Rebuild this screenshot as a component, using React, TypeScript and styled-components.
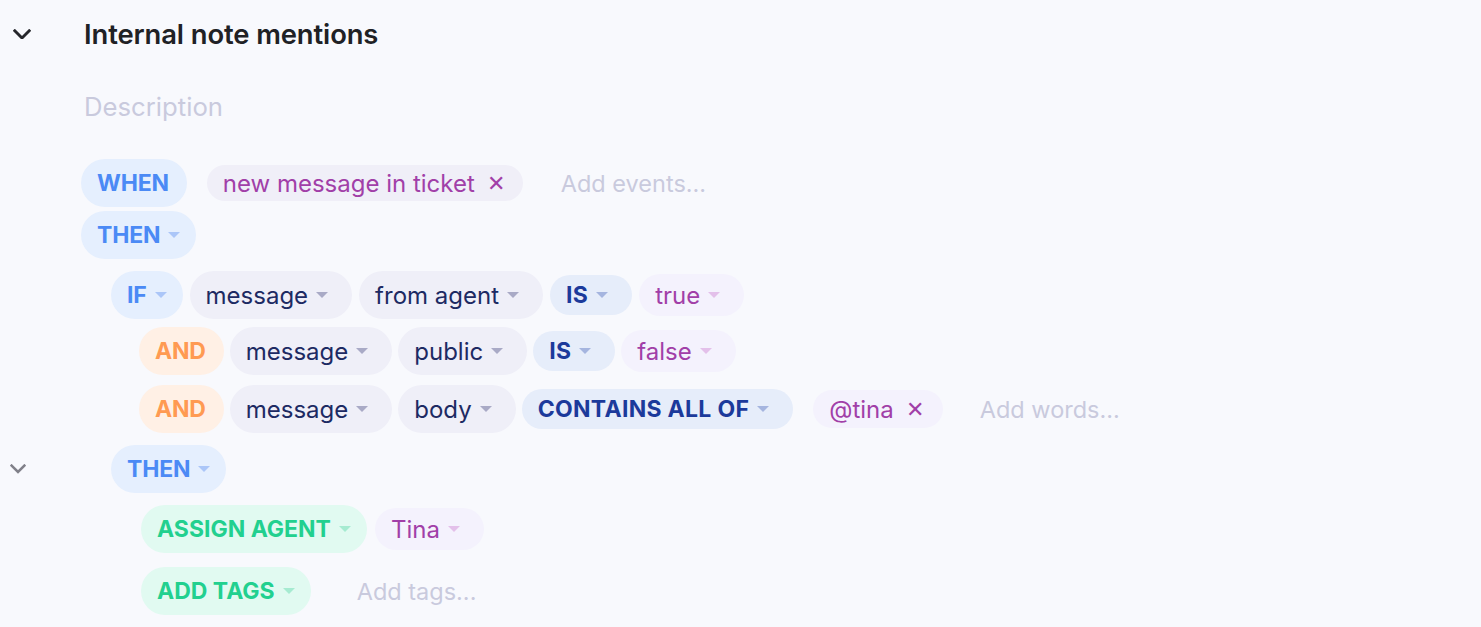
import React from "react";
import styled, { createGlobalStyle, css } from "styled-components";

const Global = createGlobalStyle`
  html, body { margin: 0; padding: 0; background: #f8f9fd; }
  body { font-family: Inter, "Noto Sans", sans-serif; -webkit-font-smoothing: antialiased; }
`;

type Kind = "blue" | "orange" | "green" | "field" | "op" | "value" | "tag";

const palette: Record<Kind, { bg: string; fg: string; caret: string }> = {
  blue: { bg: "#e5effe", fg: "#4b8af5", caret: "#abc6f8" },
  orange: { bg: "#fff0e5", fg: "#ff9a52", caret: "#ffd0ae" },
  green: { bg: "#e1faf1", fg: "#22d08f", caret: "#a6ebd1" },
  field: { bg: "#efeff8", fg: "#1d2a63", caret: "#a9aac6" },
  op: { bg: "#e6edfa", fg: "#1c3a9b", caret: "#a5b5df" },
  value: { bg: "#f4f2fd", fg: "#a13fa8", caret: "#e3c0ea" },
  tag: { bg: "#f0eff8", fg: "#a13fa8", caret: "#e3c0ea" },
};

const Page = styled.div`
  width: 1481px;
  height: 627px;
  overflow: hidden;
  box-sizing: border-box;
  padding-top: 14px;
`;

const Header = styled.div`
  display: flex;
  align-items: center;
  height: 40px;
`;

const Gutter = styled.div<{ $w?: number; $pl?: number }>`
  width: ${(p) => p.$w ?? 81}px;
  flex: none;
  display: flex;
  align-items: center;
  padding-left: ${(p) => p.$pl ?? 12}px;
  box-sizing: border-box;
`;

const Title = styled.h1`
  margin: 0;
  font-size: 27.4px;
  font-weight: 600;
  color: #202125;
  letter-spacing: -0.1px;
  line-height: 40px;
`;

const Description = styled.div`
  margin: 35px 0 0 84px;
  font-size: 25.7px;
  color: #c9cadd;
  line-height: 36px;
  height: 36px;
`;

const Row = styled.div<{ $mt: number }>`
  display: flex;
  align-items: center;
  margin-top: ${(p) => p.$mt}px;
  height: 48px;
`;

const Items = styled.div<{ $indent: number; $gap?: number }>`
  display: flex;
  align-items: center;
  gap: ${(p) => p.$gap ?? 7}px;
  margin-left: ${(p) => p.$indent}px;
`;

const isKeyword = (k: Kind) => k === "blue" || k === "orange" || k === "green";

const Pill = styled.div<{ $kind: Kind; $h: number; $pr?: number }>`
  display: inline-flex;
  align-items: center;
  box-sizing: border-box;
  height: ${(p) => p.$h}px;
  padding: 0 ${(p) => p.$pr ?? 18}px 0 16px;
  border-radius: 999px;
  white-space: nowrap;
  background: ${(p) => palette[p.$kind].bg};
  color: ${(p) => palette[p.$kind].fg};
  ${(p) =>
    isKeyword(p.$kind)
      ? css`
          font-size: 23px;
          font-weight: 700;
          letter-spacing: ${p.$kind === "green" ? 0 : -0.2}px;
        `
      : p.$kind === "op"
      ? css`
          font-size: 23px;
          font-weight: 700;
          letter-spacing: 0.3px;
        `
      : css`
          font-size: 24px;
          font-weight: 400;
        `}
`;

const Caret = styled.span<{ $kind: Kind }>`
  display: inline-block;
  width: 0;
  height: 0;
  margin-left: 8px;
  border-left: 6px solid transparent;
  border-right: 6px solid transparent;
  border-top: 6px solid ${(p) => palette[p.$kind].caret};
`;

const Close = styled.span`
  margin-left: 12px;
  font-size: 22px;
  font-weight: 300;
`;

const Placeholder = styled.span<{ $ml: number }>`
  margin-left: ${(p) => p.$ml}px;
  font-size: 23.5px;
  color: #c9cadd;
  white-space: nowrap;
`;

const Chevron = ({ color, size }: { color: string; size: number }) => (
  <svg width={size} height={size * 0.6} viewBox="0 0 20 12" fill="none">
    <path d="M2 2 L10 10 L18 2" stroke={color} strokeWidth="3.2" strokeLinecap="square" />
  </svg>
);

const Drop = ({ kind, children, h = 48 }: { kind: Kind; children: React.ReactNode; h?: number }) => (
  <Pill $kind={kind} $h={h} $pr={isKeyword(kind) ? 16 : 24}>
    {children}
    <Caret $kind={kind} />
  </Pill>
);

export default function App() {
  return (
    <Page>
      <Global />
      <Header>
        <Gutter $w={84} $pl={13}>
          <Chevron color="#25262b" size={18} />
        </Gutter>
        <Title>Internal note mentions</Title>
      </Header>
      <Description>Description</Description>

      <Row $mt={34}>
        <Gutter />
        <Items $indent={0}>
          <Pill $kind="blue" $h={48}>WHEN</Pill>
          <Pill $kind="tag" $h={36} $pr={18} style={{ marginLeft: 13 }}>
            new message in ticket<Close>✕</Close>
          </Pill>
          <Placeholder $ml={31}>Add events...</Placeholder>
        </Items>
      </Row>
      <Row $mt={4}>
        <Gutter />
        <Items $indent={0}>
          <Drop kind="blue">THEN</Drop>
        </Items>
      </Row>

      <Row $mt={12}>
        <Gutter />
        <Items $indent={30}>
          <Drop kind="blue">IF</Drop>
          <Drop kind="field">message</Drop>
          <Drop kind="field">from agent</Drop>
          <Drop kind="op" h={40}>IS</Drop>
          <Drop kind="value" h={42}>true</Drop>
        </Items>
      </Row>
      <Row $mt={8}>
        <Gutter />
        <Items $indent={58} $gap={6}>
          <Pill $kind="orange" $h={48}>AND</Pill>
          <Drop kind="field">message</Drop>
          <Drop kind="field">public</Drop>
          <Drop kind="op" h={40}>IS</Drop>
          <Drop kind="value" h={42}>false</Drop>
        </Items>
      </Row>
      <Row $mt={10}>
        <Gutter />
        <Items $indent={58} $gap={6}>
          <Pill $kind="orange" $h={48}>AND</Pill>
          <Drop kind="field">message</Drop>
          <Drop kind="field">body</Drop>
          <Drop kind="op" h={40}>CONTAINS ALL OF</Drop>
          <Pill $kind="value" $h={38} $pr={19} style={{ marginLeft: 14 }}>
            @tina<Close>✕</Close>
          </Pill>
          <Placeholder $ml={31}>Add words...</Placeholder>
        </Items>
      </Row>

      <Row $mt={12}>
        <Gutter $pl={10}>
          <Chevron color="#808089" size={16} />
        </Gutter>
        <Items $indent={30}>
          <Drop kind="blue">THEN</Drop>
        </Items>
      </Row>
      <Row $mt={12}>
        <Gutter />
        <Items $indent={60} $gap={8}>
          <Drop kind="green">ASSIGN AGENT</Drop>
          <Drop kind="value" h={42}>Tina</Drop>
        </Items>
      </Row>
      <Row $mt={14}>
        <Gutter />
        <Items $indent={60}>
          <Drop kind="green">ADD TAGS</Drop>
          <Placeholder $ml={39}>Add tags...</Placeholder>
        </Items>
      </Row>
    </Page>
  );
}
